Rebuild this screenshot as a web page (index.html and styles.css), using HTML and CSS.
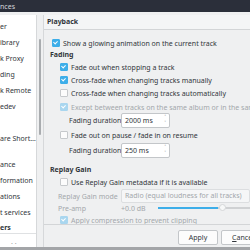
FILE: index.html
```html
<!DOCTYPE html>
<html lang="en">
<head>
    <meta charset="UTF-8">
    <title>Preferences</title>
    <link rel="stylesheet" href="styles.css">
</head>
<body>
    <div class="window">
        <div class="titlebar">nces</div>

        <div class="main">
            <div class="nav">
                <ul class="nav-list">
                    <li>er</li>
                    <li>ibrary</li>
                    <li>k Proxy</li>
                    <li>ding</li>
                    <li>k Remote</li>
                    <li>edev</li>
                    <li></li>
                    <li>are Short…</li>
                    <li class="nav-gap"></li>
                    <li>ance</li>
                    <li>formation</li>
                    <li>ations</li>
                    <li>t services</li>
                    <li class="nav-group">ers</li>
                    <li class="nav-more">· ·</li>
                </ul>
                <div class="nav-scroll"><div class="nav-thumb"></div></div>
            </div>

            <div class="page">
                <div class="page-title">Playback</div>

                <div class="page-content">
                    <div class="row lvl1 r-first"><span class="cb checked"></span>Show a glowing animation on the current track</div>

                    <div class="section">Fading</div>
                    <div class="row lvl2"><span class="cb checked"></span>Fade out when stopping a track</div>
                    <div class="row lvl2 r-1"><span class="cb checked"></span>Cross-fade when changing tracks manually</div>
                    <div class="row lvl2 r-1"><span class="cb"></span>Cross-fade when changing tracks automatically</div>
                    <div class="row lvl2 r-2 disabled"><span class="cb checked"></span>Except between tracks on the same album or in the same CUE sheet</div>
                    <div class="row field">
                        <label>Fading duration</label>
                        <div class="spin">2000 ms<span class="arrows"><i>˄</i><i>˅</i></span></div>
                    </div>
                    <div class="row lvl2 r-1"><span class="cb"></span>Fade out on pause / fade in on resume</div>
                    <div class="row field r-2">
                        <label>Fading duration</label>
                        <div class="spin">250 ms<span class="arrows"><i>˄</i><i>˅</i></span></div>
                    </div>

                    <div class="section s-gap">Replay Gain</div>
                    <div class="row lvl2"><span class="cb"></span>Use Replay Gain metadata if it is available</div>
                    <div class="row form disabled r-2">
                        <label>Replay Gain mode</label>
                        <div class="combo">Radio (equal loudness for all tracks)</div>
                    </div>
                    <div class="row form disabled">
                        <label>Pre-amp</label>
                        <span class="db">+0.0 dB</span>
                        <div class="slider">
                            <div class="slider-fill"></div>
                            <div class="slider-handle"></div>
                        </div>
                    </div>
                    <div class="row lvl2 disabled"><span class="cb checked"></span>Apply compression to prevent clipping</div>
                </div>

                <div class="buttons">
                    <button>Apply</button>
                    <button><u>C</u>ancel</button>
                </div>
            </div>
        </div>
    </div>
</body>
</html>
```

FILE: styles.css
```css
body {
    margin: 0;
    font-family: "Noto Sans", sans-serif;
    font-size: 7px;
    color: #31363b;
    background-color: #eff0f1;
    overflow: hidden;
}

.window {
    width: 250px;
    height: 250px;
    box-sizing: border-box;
    border-bottom: 3px solid #a3a5a8;
    display: flex;
    flex-direction: column;
    overflow: hidden;
}

.titlebar {
    height: 12px;
    line-height: 13px;
    background-color: #2b2f3a;
    color: #d3d6da;
    font-size: 7px;
    white-space: nowrap;
}

.main {
    flex: 1;
    display: flex;
    padding-top: 3px;
    min-height: 0;
}

/* sidebar */
.nav {
    display: flex;
    width: 43px;
    flex-shrink: 0;
}

.nav-list {
    list-style: none;
    margin: 0;
    padding: 4px 0 0;
    width: 36px;
    background-color: #fff;
    border-right: 1px solid #d6d8da;
    overflow: hidden;
    white-space: nowrap;
}

.nav-list li {
    height: 16px;
    line-height: 16px;
}

.nav-list .nav-gap {
    height: 10px;
}

.nav-list .nav-group {
    margin-top: 2px;
    height: 10px;
    line-height: 10px;
    font-weight: bold;
    border-bottom: 1px solid #dfe1e3;
}

.nav-list .nav-more {
    padding-left: 11px;
    color: #9a9da0;
    line-height: 20px;
}

.nav-scroll {
    flex: 1;
    padding: 24px 2px 0;
}

.nav-thumb {
    width: 2px;
    height: 96px;
    margin-left: 0;
    border-radius: 1px;
    background-color: #a9acaf;
}

/* page */
.page {
    flex: 1;
    display: flex;
    flex-direction: column;
    border-left: 1px solid #d6d8da;
    min-width: 0;
}

.page-title {
    height: 14px;
    line-height: 14px;
    padding-left: 3px;
    font-weight: bold;
    background-color: #f4f5f6;
    border-bottom: 1px solid #d3d5d7;
}

.page-content {
    height: 195px;
    box-sizing: border-box;
    border-bottom: 1px solid #d3d5d7;
    white-space: nowrap;
    overflow: hidden;
}

.row {
    display: flex;
    align-items: center;
    height: 12px;
}

.r-first { margin-top: 7px; }
.r-1 { margin-top: 1px; }
.r-2 { margin-top: 2px; }

.lvl1 { padding-left: 8px; }
.lvl2 { padding-left: 16px; }

.section {
    height: 12px;
    line-height: 12px;
    padding-left: 6px;
    font-weight: bold;
}

.s-gap { margin-top: 6px; }

.disabled { color: #a3a7ab; }

.cb {
    width: 6px;
    height: 6px;
    margin-right: 3px;
    border: 1px solid #c6c9cc;
    border-radius: 1px;
    background-color: #fcfcfc;
    position: relative;
    flex-shrink: 0;
}

.cb.checked {
    background-color: #3daee9;
    border-color: #3daee9;
}

.cb.checked::after {
    content: "";
    position: absolute;
    left: 1px;
    top: 0;
    width: 2px;
    height: 3px;
    border: solid #fff;
    border-width: 0 1px 1px 0;
    transform: rotate(45deg);
}

.disabled .cb.checked {
    background-color: #a9d6ef;
    border-color: #a9d6ef;
}

.field {
    height: 15px;
    padding-left: 25px;
}

.field label {
    width: 52px;
}

.spin {
    width: 44px;
    height: 13px;
    line-height: 13px;
    padding-left: 3px;
    background-color: #fff;
    border: 1px solid #c3c6c9;
    border-radius: 2px;
    position: relative;
}

.arrows {
    position: absolute;
    right: 3px;
    top: 0;
    display: flex;
    flex-direction: column;
    font-size: 5px;
    line-height: 6px;
    color: #6b7075;
}

.arrows i {
    font-style: normal;
}

.form {
    padding-left: 14px;
}

.form label {
    width: 63px;
    flex-shrink: 0;
}

.combo {
    height: 12px;
    line-height: 12px;
    padding-left: 3px;
    width: 140px;
    background-color: #f5f6f7;
    border: 1px solid #dcdee0;
    border-radius: 2px;
}

.db {
    width: 37px;
    flex-shrink: 0;
}

.slider {
    flex: 1;
    height: 2px;
    background-color: #cfd1d3;
    position: relative;
}

.slider-fill {
    width: 60px;
    height: 2px;
    background-color: #3daee9;
}

.slider-handle {
    position: absolute;
    left: 61px;
    top: -3px;
    width: 5px;
    height: 5px;
    border: 1px solid #d5d7d9;
    border-radius: 50%;
    background-color: #f7f8f8;
}

.buttons {
    display: flex;
    gap: 3px;
    padding: 5px 0 0 134px;
}

.buttons button {
    flex-shrink: 0;
    width: 40px;
    height: 15px;
    padding: 0;
    font-family: inherit;
    font-size: 7px;
    color: #31363b;
    background-color: #fcfcfc;
    border: 1px solid #c3c6c9;
    border-radius: 2px;
}

.buttons button + button {
    width: 44px;
}
```
